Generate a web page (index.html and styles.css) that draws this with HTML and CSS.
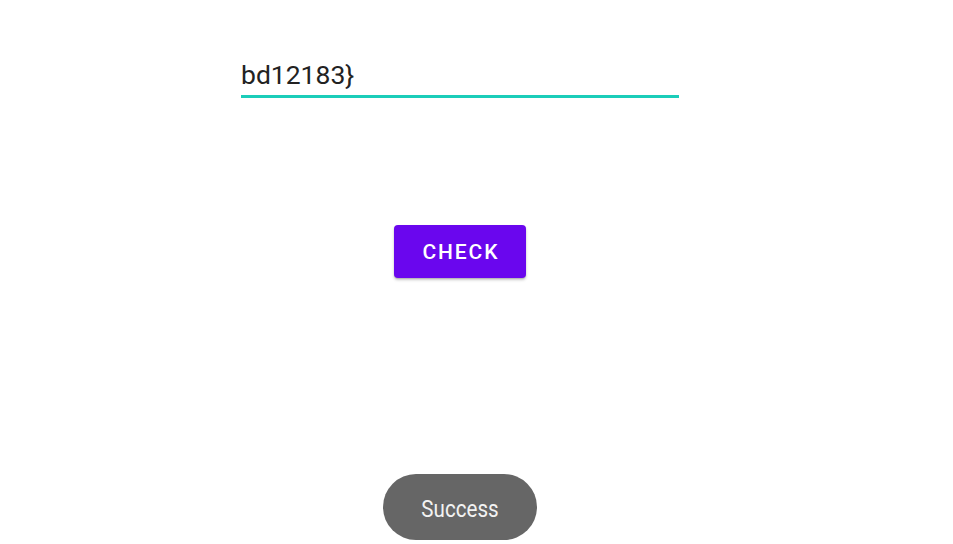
FILE: index.html
```html
<!DOCTYPE html>
<html>
<head>
<meta charset="utf-8">
<link rel="stylesheet" href="styles.css">
</head>
<body>
<div class="screen">
  <div class="field">
    <div class="field-text">bd12183}</div>
  </div>
  <button class="check-btn">CHECK</button>
  <div class="toast-layer">
    <div class="toast"><span class="toast-text">Success</span></div>
  </div>
</div>
</body>
</html>
```
FILE: styles.css
```css
html, body {
  margin: 0;
  padding: 0;
  background: #ffffff;
  overflow: hidden;
}
.screen {
  position: relative;
  width: 920px;
  height: 544px;
  display: flex;
  flex-direction: column;
  align-items: center;
  font-family: Roboto, "Noto Sans", sans-serif;
}
.field {
  margin-top: 59px;
  width: 438px;
  padding-bottom: 4px;
  border-bottom: 3px solid #1bcdb9;
}
.field-text {
  font-size: 26.5px;
  line-height: 32px;
  color: #222222;
}
.check-btn {
  margin-top: 127px;
  width: 132px;
  height: 53px;
  border: none;
  border-radius: 4px;
  background: #6a06ee;
  color: #ffffff;
  font-family: Roboto, "Noto Sans", sans-serif;
  font-weight: 500;
  font-size: 21px;
  letter-spacing: 1.87px;
  padding: 1px 0 0 1.87px;
  display: flex;
  align-items: center;
  justify-content: center;
  box-shadow: 0 2px 3px rgba(0, 0, 0, 0.22), 0 1px 1px rgba(0, 0, 0, 0.12);
}
.toast-layer {
  position: absolute;
  left: 0;
  right: 0;
  top: 474px;
  display: flex;
  justify-content: center;
}
.toast {
  width: 154px;
  height: 66px;
  border-radius: 33px;
  background: #666666;
  display: flex;
  align-items: center;
  justify-content: center;
}
.toast-text {
  display: inline-block;
  font-size: 24.5px;
  padding-top: 3px;
  color: #f2f2f2;
  transform: scaleX(0.84);
}
```
